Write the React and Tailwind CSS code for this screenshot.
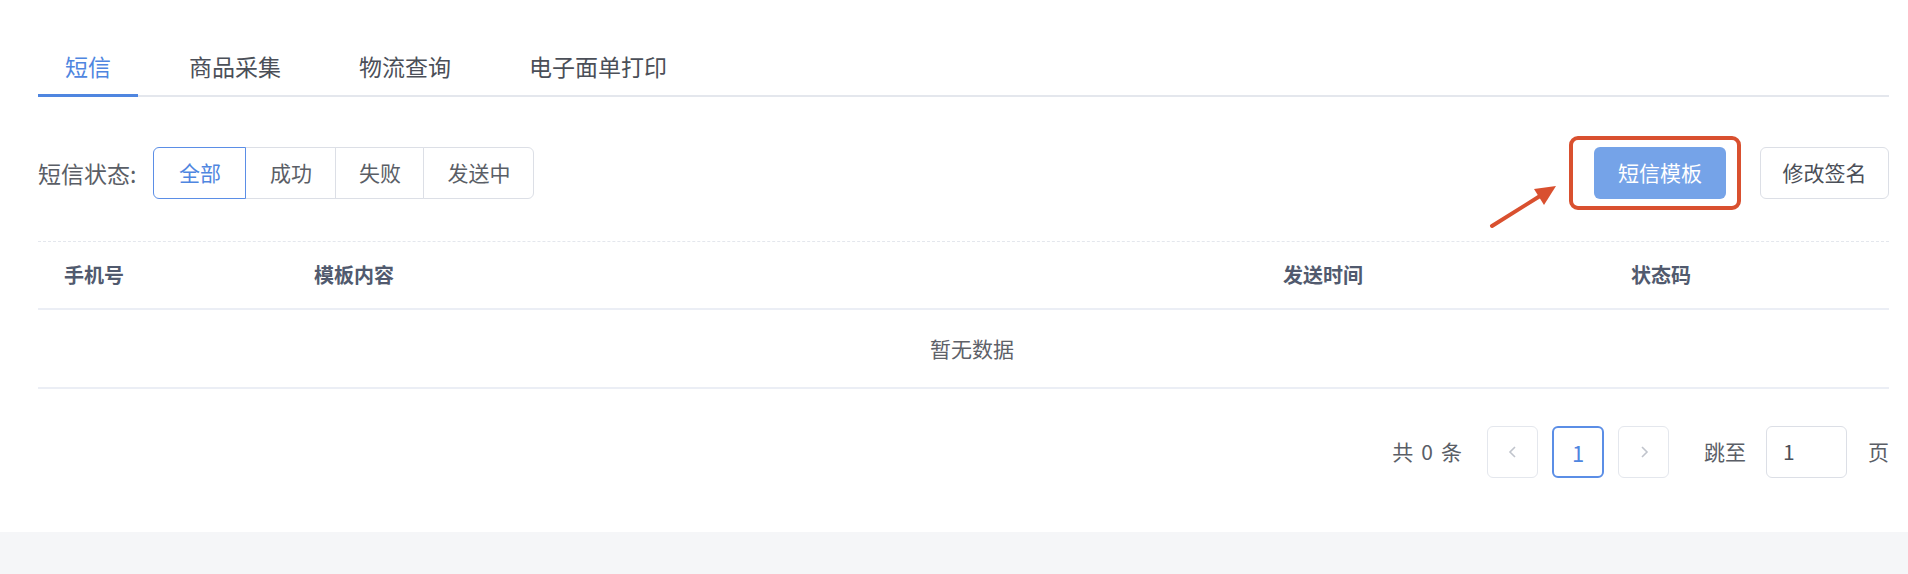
import React from 'react';

const tabs = ['短信', '商品采集', '物流查询', '电子面单打印'];
const statuses = [
  { label: '全部', w: 'w-[93px]' },
  { label: '成功', w: 'w-[91px]' },
  { label: '失败', w: 'w-[89px]' },
  { label: '发送中', w: 'w-[111px]' },
];

function App() {
  return (
    <div className="min-h-screen bg-[#f5f6f8] font-['PingFang_SC','Noto_Sans_CJK_SC',sans-serif]">
      <div className="bg-white pl-[38px] pr-[19px] pt-[39px] pb-[54px]">
        {/* Tabs */}
        <div className="flex gap-[24px] border-b-2 border-[#e4e7ed]">
          {tabs.map((t, i) => (
            <div
              key={t}
              className={
                i === 0
                  ? 'h-[58px] px-[27px] -mb-[2px] flex items-center border-b-[3px] border-[#4f86e0] text-[23px] text-[#4f86e0]'
                  : 'h-[58px] px-[27px] -mb-[2px] flex items-center border-b-[3px] border-transparent text-[23px] text-[#4b4f58]'
              }
            >
              {t}
            </div>
          ))}
        </div>

        {/* Filter row */}
        <div className="mt-[50px] flex items-center justify-between">
          <div className="flex items-center">
            <span className="text-[23px] text-[#5a5e66] mr-[17px]">短信状态:</span>
            <div className="flex h-[52px]">
              {statuses.map((s, i) => (
                <button
                  key={s.label}
                  className={
                    i === 0
                      ? `${s.w} h-full text-[21px] text-[#4f86e0] border border-[#5b8ee6] rounded-l-[6px] bg-white z-10`
                      : i === statuses.length - 1
                      ? `${s.w} h-full text-[21px] text-[#5a5e66] border border-[#dcdfe6] -ml-px rounded-r-[6px] bg-white`
                      : `${s.w} h-full text-[21px] text-[#5a5e66] border border-[#dcdfe6] -ml-px bg-white`
                  }
                >
                  {s.label}
                </button>
              ))}
            </div>
          </div>

          <div className="flex items-center gap-[34px]">
            <div className="relative">
              <button className="h-[52px] w-[132px] rounded-[6px] bg-[#75a3e8] text-white text-[21px]">
                短信模板
              </button>
              {/* annotation box */}
              <div className="absolute -left-[25px] -right-[15px] -top-[11px] -bottom-[11px] border-4 border-[#d9502f] rounded-[9px] pointer-events-none"></div>
              {/* annotation arrow */}
              <svg className="absolute -left-[106px] top-[34px] w-[74px] h-[50px]" viewBox="0 0 74 50">
                <line x1="4" y1="45" x2="52" y2="15" stroke="#d9502f" strokeWidth="4" strokeLinecap="round" />
                <polygon points="68,5 56,24 46,8" fill="#d9502f" />
              </svg>
            </div>
            <button className="h-[52px] w-[129px] rounded-[6px] border border-[#dcdfe6] bg-white text-[21px] text-[#4b4f58]">
              修改签名
            </button>
          </div>
        </div>

        {/* Table */}
        <div className="mt-[42px] border-t border-dashed border-[#e4e7ed]">
          <div className="grid grid-cols-[250px_969px_348px_1fr] h-[68px] items-center border-b-2 border-[#ebeef5] text-[20px] font-semibold text-[#515a6e]">
            <div className="px-[26px]">手机号</div>
            <div className="px-[26px]">模板内容</div>
            <div className="px-[26px]">发送时间</div>
            <div className="px-[26px]">状态码</div>
          </div>
          <div className="h-[79px] flex items-center justify-center pl-[17px] border-b-2 border-[#ebeef5] text-[21px] text-[#5e6169]">
            暂无数据
          </div>
        </div>

        {/* Pagination */}
        <div className="mt-[37px] flex items-center justify-end h-[52px] text-[21px] text-[#5a5e66]">
          <span className="mr-[25px] flex gap-[8px]">
            <span>共</span>
            <span>0</span>
            <span>条</span>
          </span>
          <button className="w-[51px] h-[52px] rounded-[6px] border border-[#e4e7ed] flex items-center justify-center text-[#c0c4cc]">
            <svg className="w-[16px] h-[16px]" viewBox="0 0 16 16" fill="none" stroke="currentColor" strokeWidth="1.6">
              <path d="M10 3 L5 8 L10 13" />
            </svg>
          </button>
          <button className="ml-[14px] w-[52px] h-[52px] rounded-[6px] border-2 border-[#5b8ee6] text-[#4f86e0] text-[22px]">
            1
          </button>
          <button className="ml-[14px] w-[51px] h-[52px] rounded-[6px] border border-[#e4e7ed] flex items-center justify-center text-[#c0c4cc]">
            <svg className="w-[16px] h-[16px]" viewBox="0 0 16 16" fill="none" stroke="currentColor" strokeWidth="1.6">
              <path d="M6 3 L11 8 L6 13" />
            </svg>
          </button>
          <span className="ml-[35px]">跳至</span>
          <div className="ml-[20px] w-[81px] h-[52px] rounded-[6px] border border-[#dcdfe6] flex items-center pl-[16px] text-[#4b4f58]">
            1
          </div>
          <span className="ml-[21px]">页</span>
        </div>
      </div>
    </div>
  );
}

export default App;
